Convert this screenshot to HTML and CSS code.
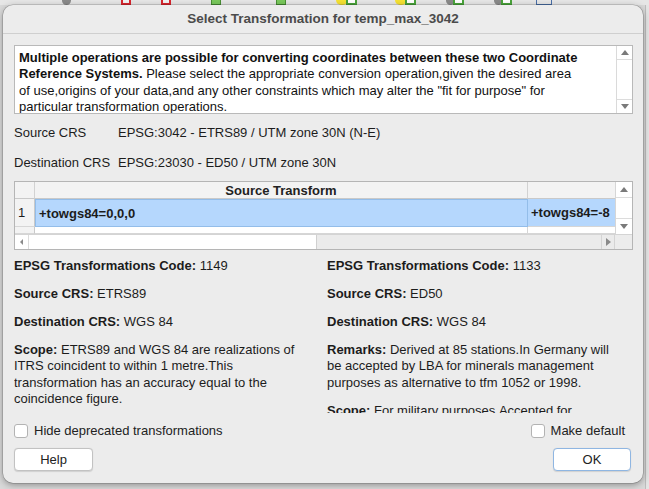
FILE: index.html
```html
<!DOCTYPE html>
<html>
<head>
<meta charset="utf-8">
<link rel="stylesheet" href="styles.css">
</head>
<body>
<div class="toolbar">
  <span class="ti ti-gray" style="margin-left:62px"></span>
  <span class="ti ti-red" style="margin-left:50px"></span>
  <span class="ti ti-red" style="margin-left:30px"></span>
  <span class="ti ti-green" style="margin-left:40px"></span>
  <span class="ti ti-green" style="margin-left:55px"></span>
  <span class="ti ti-yellow" style="margin-left:50px"></span>
  <span class="ti ti-greenbox"></span>
  <span class="ti ti-yellow" style="margin-left:38px"></span>
  <span class="ti ti-greenbox"></span>
  <span class="ti ti-gray" style="margin-left:30px"></span>
  <span class="ti ti-greenbox"></span>
  <span class="ti ti-gray" style="margin-left:30px"></span>
  <span class="ti ti-greenbox"></span>
  <span class="ti ti-blue" style="margin-left:24px"></span>
</div>
<div class="dialog">
  <div class="titlebar">Select Transformation for temp_max_3042</div>
  <div class="content">
    <div class="textbox">
      <div class="textbox-text">
        <b>Multiple operations are possible for converting coordinates between these two Coordinate</b><br>
        <b>Reference Systems.</b> Please select the appropriate conversion operation,given the desired area<br>
        of use,origins of your data,and any other constraints which may alter the "fit for purpose" for<br>
        particular transformation operations.
      </div>
      <div class="vscroll">
        <div class="sbtn"><span class="arrow-up"></span></div>
        <div class="strack"></div>
        <div class="sbtn sbtn-bottom"><span class="arrow-down"></span></div>
      </div>
    </div>

    <div class="crs-row"><span class="crs-label">Source CRS</span><span>EPSG:3042 - ETRS89 / UTM zone 30N (N-E)</span></div>
    <div class="crs-row crs-row2"><span class="crs-label">Destination CRS</span><span>EPSG:23030 - ED50 / UTM zone 30N</span></div>

    <div class="table">
      <div class="table-main">
        <div class="tgrid">
          <div class="th th-num"></div>
          <div class="th th-src">Source Transform</div>
          <div class="th th-dst"></div>
          <div class="td td-num">1</div>
          <div class="td td-src sel current">+towgs84=0,0,0</div>
          <div class="td td-dst sel">+towgs84=-8</div>
          <div class="td td-num td-empty"></div>
          <div class="td td-empty"></div>
          <div class="td td-empty td-dst"></div>
        </div>
        <div class="tvscroll">
          <div class="tsbtn"><span class="arrow-up"></span></div>
          <div class="strack"></div>
          <div class="tsbtn tsbtn-bottom"><span class="arrow-down"></span></div>
        </div>
      </div>
      <div class="hscroll">
        <div class="hbtn"><span class="arrow-left"></span></div>
        <div class="hthumb"></div>
        <div class="htrack"></div>
        <div class="hbtn hbtn-right"><span class="arrow-right"></span></div>
        <div class="hcorner"></div>
      </div>
    </div>

    <div class="details">
      <div class="col">
        <p><b>EPSG Transformations Code:</b> 1149</p>
        <p><b>Source CRS:</b> ETRS89</p>
        <p><b>Destination CRS:</b> WGS 84</p>
        <p><b>Scope:</b> ETRS89 and WGS 84 are realizations of<br>ITRS coincident to within 1 metre.This<br>transformation has an accuracy equal to the<br>coincidence figure.</p>
      </div>
      <div class="col">
        <p><b>EPSG Transformations Code:</b> 1133</p>
        <p><b>Source CRS:</b> ED50</p>
        <p><b>Destination CRS:</b> WGS 84</p>
        <p><b>Remarks:</b> Derived at 85 stations.In Germany will<br>be accepted by LBA for minerals management<br>purposes as alternative to tfm 1052 or 1998.</p>
        <p><b>Scope:</b> For military purposes.Accepted for</p>
      </div>
    </div>

    <div class="checks">
      <label class="check"><span class="box"></span>Hide deprecated transformations</label>
      <label class="check"><span class="box"></span>Make default</label>
    </div>

    <div class="buttons">
      <button class="btn">Help</button>
      <button class="btn btn-default">OK</button>
    </div>
  </div>
</div>
</body>
</html>
```

FILE: styles.css
```css
* { box-sizing: border-box; }
html, body {
  margin: 0;
  padding: 0;
}
body {
  width: 649px;
  height: 489px;
  overflow: hidden;
  background: linear-gradient(to right, #d9d9d9 0, #d9d9d9 645px, #bdbdbd 645px, #bdbdbd 646px, #e4e4e4 646px);
  font-family: "Liberation Sans", Arial, sans-serif;
  font-size: 13px;
  color: #1c1c1c;
}
.toolbar {
  height: 5px;
  display: flex;
  align-items: flex-end;
  overflow: hidden;
  background: #e6e6e6;
}
.ti {
  display: inline-block;
  width: 10px;
  height: 5px;
}
.ti-gray { background: #8a8a8a; border-radius: 0 0 5px 5px; width: 9px; }
.ti-red { border: 2px solid #d7262e; border-top: none; background: #f2f2f2; }
.ti-green { background: #79c85b; border: 1px solid #4a8f35; border-top: none; }
.ti-yellow { background: #f5e132; border-radius: 0 0 6px 6px; width: 12px; }
.ti-greenbox { background: #fff; border: 2px solid #4aa33b; border-top: none; width: 11px; margin-left: -2px; }
.ti-blue { border: 1px solid #4a6fa8; border-top: none; width: 16px; background: transparent; }

.dialog {
  position: relative;
  margin-left: 3px;
  width: 640px;
  height: 478px;
  background: #ececec;
  border-radius: 10px;
  box-shadow: 0 2px 7px rgba(0,0,0,0.35), 0 0 0 0.5px rgba(0,0,0,0.25);
  display: flex;
  flex-direction: column;
  overflow: hidden;
}
.titlebar {
  height: 29px;
  flex: none;
  border-bottom: 1px solid #cfcfcf;
  text-align: center;
  line-height: 28px;
  font-weight: bold;
  color: #4b4b4b;
  font-size: 13.5px;
}
.content {
  padding: 11px 10px 11px 11px;
  display: flex;
  flex-direction: column;
  flex: 1;
}
.textbox {
  height: 69px;
  background: #fff;
  border: 1px solid #b9b9b9;
  display: flex;
  flex: none;
}
.textbox-text {
  flex: 1;
  padding: 4px 0 0 4px;
  line-height: 16.4px;
  overflow: hidden;
  white-space: nowrap;
  color: #111;
}
.vscroll {
  width: 16px;
  border-left: 1px solid #dadada;
  display: flex;
  flex-direction: column;
  background: #fff;
}
.sbtn {
  height: 14px;
  border-bottom: 1px solid #dcdcdc;
  display: flex;
  align-items: center;
  justify-content: center;
}
.sbtn-bottom {
  border-bottom: none;
  border-top: 1px solid #dcdcdc;
}
.strack { flex: 1; }
.arrow-up, .arrow-down, .arrow-left, .arrow-right {
  width: 0; height: 0;
  display: block;
}
.arrow-up { border-left: 4px solid transparent; border-right: 4px solid transparent; border-bottom: 5px solid #7a7a7a; }
.arrow-down { border-left: 4px solid transparent; border-right: 4px solid transparent; border-top: 5px solid #7a7a7a; }
.arrow-left { border-top: 3px solid transparent; border-bottom: 3px solid transparent; border-right: 3px solid #8a8a8a; }
.arrow-right { border-top: 4px solid transparent; border-bottom: 4px solid transparent; border-left: 5px solid #8a8a8a; }

.crs-row {
  display: flex;
  height: 16px;
  line-height: 16px;
  margin-top: 11px;
  flex: none;
}
.crs-row2 { margin-top: 14px; }
.crs-label { width: 104px; flex: none; }

.table {
  margin-top: 10px;
  height: 69px;
  border: 1px solid #b5b5b5;
  display: flex;
  flex-direction: column;
  background: #fff;
  flex: none;
}
.table-main {
  display: flex;
  height: 53px;
}
.tgrid {
  flex: 1;
  display: grid;
  grid-template-columns: 20px 493px 1fr;
  grid-template-rows: 17px 28px 1fr;
  overflow: hidden;
}
.th {
  background: #f3f3f3;
  border-bottom: 1px solid #c9c9c9;
  border-right: 1px solid #d2d2d2;
  font-weight: bold;
  text-align: center;
  line-height: 17px;
  color: #222;
}
.th-dst { border-right: none; }
.td {
  border-right: 1px solid #d6d6d6;
  border-bottom: 1px solid #d6d6d6;
  line-height: 27px;
  white-space: nowrap;
  overflow: hidden;
  font-weight: bold;
  padding-left: 3px;
}
.td-num {
  background: #f3f3f3;
  font-weight: normal;
  padding-left: 3px;
  border-right: 1px solid #c9c9c9;
}
.td-dst { border-right: none; }
.sel { background: #b5d7fd; }
.current { border: 1px solid #93bde9; }
.td-empty { background: #fff; }
.td-num.td-empty { background: #f3f3f3; }

.tvscroll {
  width: 17px;
  border-left: 1px solid #d6d6d6;
  display: flex;
  flex-direction: column;
  background: #fff;
}
.tsbtn {
  height: 16px;
  border-bottom: 1px solid #dcdcdc;
  display: flex;
  align-items: center;
  justify-content: center;
}
.tsbtn-bottom {
  border-bottom: none;
  border-top: 1px solid #dcdcdc;
}

.hscroll {
  height: 15px;
  border-top: 1px solid #d4d4d4;
  display: flex;
  background: #ebebeb;
}
.hbtn {
  width: 14px;
  background: #fff;
  border-right: 1px solid #dcdcdc;
  display: flex;
  align-items: center;
  justify-content: center;
}
.hthumb {
  width: 288px;
  background: #fff;
  border-right: 1px solid #d0d0d0;
}
.htrack { flex: 1; }
.hbtn-right {
  background: #ebebeb;
  border-right: 1px solid #d4d4d4;
  border-left: 1px solid #d4d4d4;
}
.hcorner {
  width: 17px;
  background: #ececec;
}

.details {
  height: 163px;
  padding-top: 8px;
  overflow: hidden;
  display: grid;
  grid-template-columns: 305px 1fr;
  column-gap: 8px;
  flex: none;
}
.details p {
  margin: 0 0 11.6px 0;
  line-height: 16.4px;
  white-space: nowrap;
}

.checks {
  margin-top: 10px;
  height: 16px;
  display: flex;
  justify-content: space-between;
  flex: none;
  padding-right: 8px;
}
.check {
  display: flex;
  align-items: center;
  line-height: 16px;
  color: #222;
}
.box {
  width: 14px;
  height: 14px;
  background: #fff;
  border: 1px solid #b3b3b3;
  border-radius: 3px;
  margin-right: 6px;
}

.buttons {
  margin-top: 9px;
  display: flex;
  justify-content: space-between;
  padding-right: 2px;
  flex: none;
}
.btn {
  width: 79px;
  height: 23px;
  background: #fff;
  border: 1px solid #c2c2c2;
  border-radius: 4px;
  font-family: "Liberation Sans", Arial, sans-serif;
  font-size: 13px;
  color: #222;
  padding: 0;
  box-shadow: 0 0.5px 1px rgba(0,0,0,0.12);
}
.btn-default {
  width: 78px;
  border-color: #8fb6e2;
}
```
